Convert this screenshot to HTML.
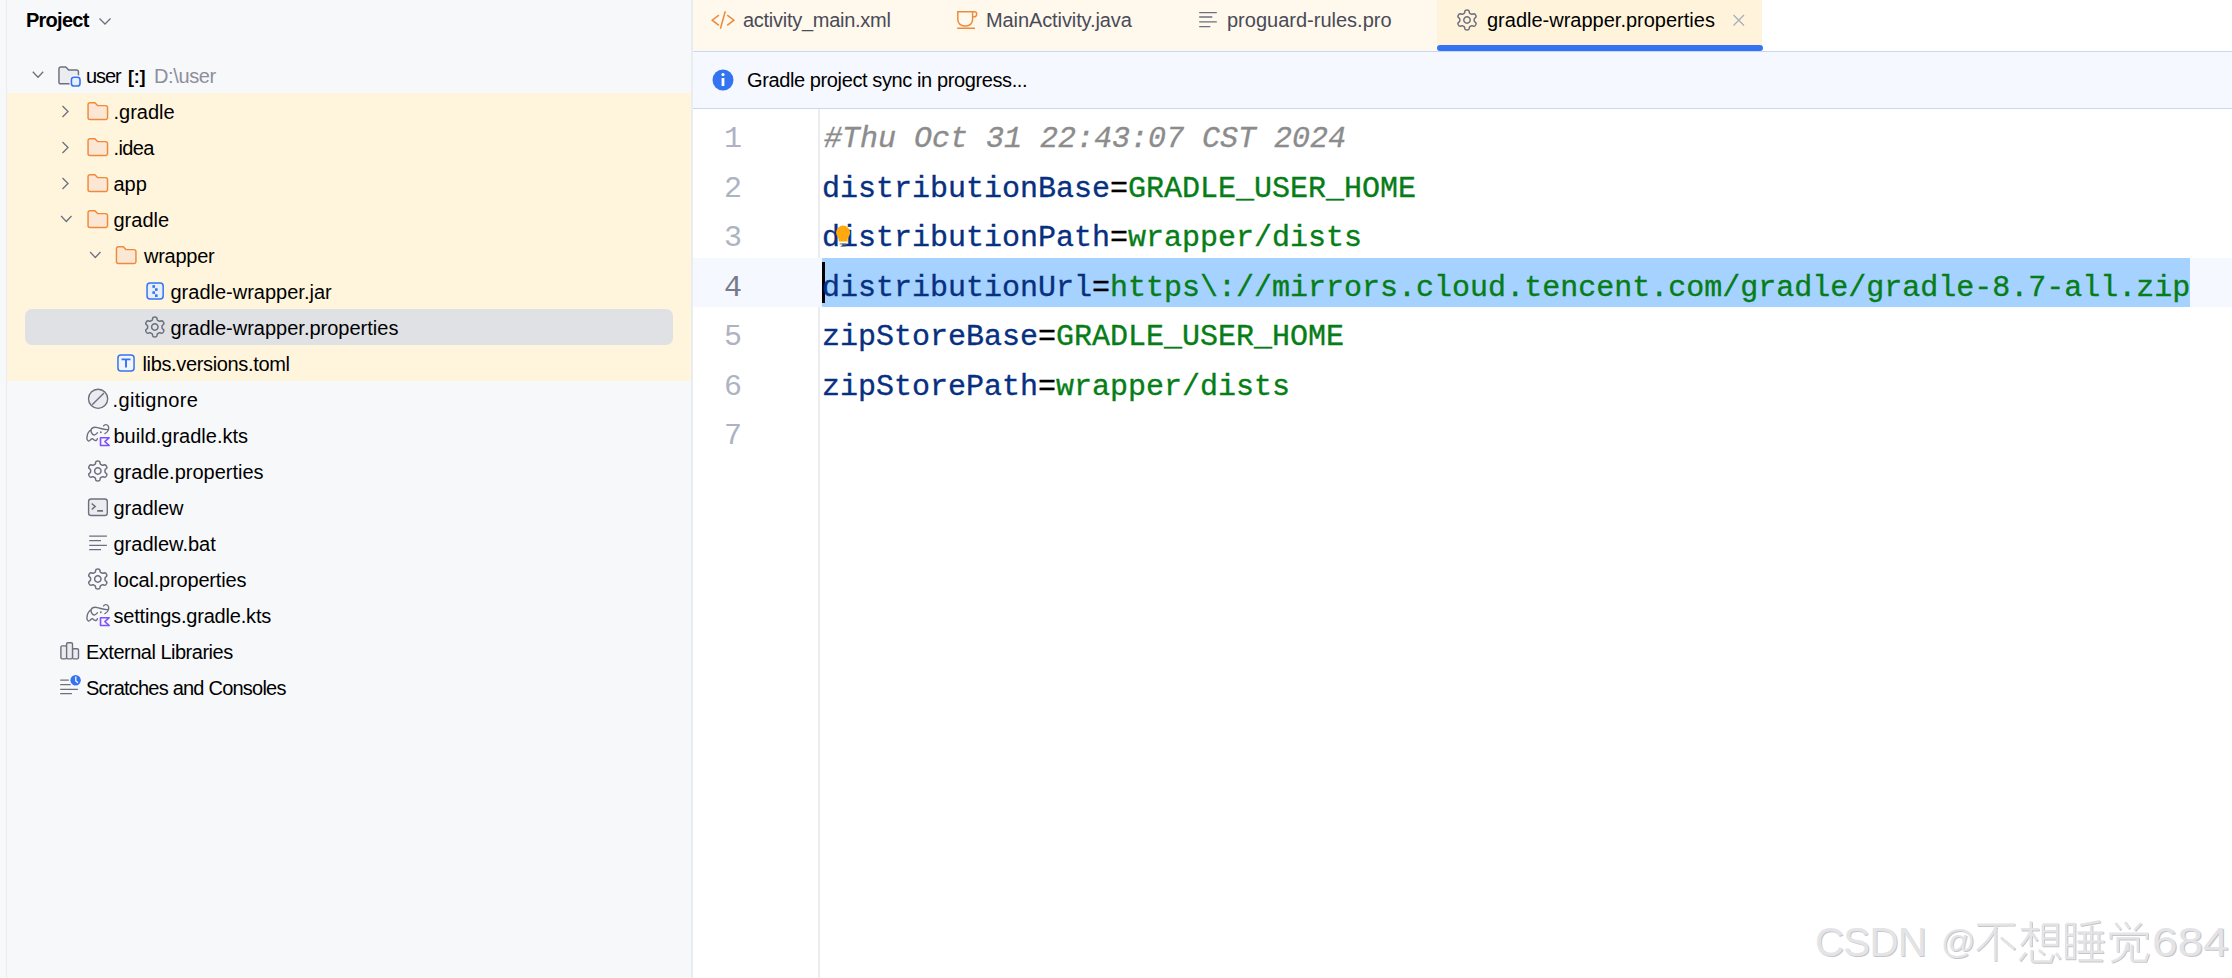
<!DOCTYPE html>
<html><head><meta charset="utf-8"><style>
html,body{margin:0;padding:0;}
body{width:2232px;height:978px;overflow:hidden;position:relative;background:#fff;font-family:'Liberation Sans', sans-serif;}
</style></head><body>
<div style="position:absolute;left:0;top:0;width:691px;height:978px;background:#F7F8FA"></div><div style="position:absolute;left:6px;top:0;width:1px;height:978px;background:#EBECF0"></div><div style="position:absolute;left:691px;top:0;width:2px;height:978px;background:#EBECF0"></div><div style="position:absolute;left:7px;top:93px;width:684px;height:288px;background:#FFF5DC"></div><div style="position:absolute;left:25px;top:309px;width:648px;height:36px;background:#DFE1E5;border-radius:7px"></div><div style="position:absolute;left:693px;top:0;width:744px;height:51px;background:#FFF8EC"></div><div style="position:absolute;left:1437px;top:0;width:325px;height:51px;background:#FFF4DB"></div><div style="position:absolute;left:1762px;top:0;width:470px;height:51px;background:#FFFFFF"></div><div style="position:absolute;left:1437px;top:45px;width:326px;height:6px;background:#3574F0;border-radius:3px 3px 3px 3px"></div><div style="position:absolute;left:693px;top:51px;width:1539px;height:1px;background:#C5D7FA"></div><div style="position:absolute;left:693px;top:52px;width:1539px;height:56px;background:#F5F8FE"></div><div style="position:absolute;left:693px;top:108px;width:1539px;height:1px;background:#C5D7FA"></div><div style="position:absolute;left:818px;top:109px;width:2px;height:869px;background:#EBECF0"></div><div style="position:absolute;left:693px;top:258px;width:1539px;height:49px;background:#F5F8FE"></div><div style="position:absolute;left:822px;top:258px;width:1368px;height:49px;background:#A6D2FF"></div><div style="position:absolute;left:822px;top:262px;width:3px;height:41px;background:#000"></div><div style="position:absolute;left:26px;top:2.17px;height:36px;line-height:36px;font-family:'Liberation Sans', sans-serif;font-size:20px;color:#000;font-weight:bold;white-space:pre;letter-spacing:-0.75px;">Project</div><div style="position:absolute;left:86px;top:57.87px;height:36px;line-height:36px;font-family:'Liberation Sans', sans-serif;font-size:20px;color:#000;font-weight:normal;white-space:pre;letter-spacing:-1.1px;">user</div><div style="position:absolute;left:128px;top:58.56px;height:36px;line-height:36px;font-family:'Liberation Sans', sans-serif;font-size:18px;color:#000;font-weight:bold;white-space:pre;letter-spacing:-0.3px;">[:]</div><div style="position:absolute;left:154px;top:57.87px;height:36px;line-height:36px;font-family:'Liberation Sans', sans-serif;font-size:20px;color:#8C8F9C;font-weight:normal;white-space:pre;letter-spacing:-0.37px;">D:\user</div><div style="position:absolute;left:113.5px;top:93.87px;height:36px;line-height:36px;font-family:'Liberation Sans', sans-serif;font-size:20px;color:#000;font-weight:normal;white-space:pre;letter-spacing:0px;">.gradle</div><div style="position:absolute;left:113.5px;top:129.87px;height:36px;line-height:36px;font-family:'Liberation Sans', sans-serif;font-size:20px;color:#000;font-weight:normal;white-space:pre;letter-spacing:-0.6px;">.idea</div><div style="position:absolute;left:113.5px;top:165.87px;height:36px;line-height:36px;font-family:'Liberation Sans', sans-serif;font-size:20px;color:#000;font-weight:normal;white-space:pre;letter-spacing:0px;">app</div><div style="position:absolute;left:113.5px;top:201.87px;height:36px;line-height:36px;font-family:'Liberation Sans', sans-serif;font-size:20px;color:#000;font-weight:normal;white-space:pre;letter-spacing:0px;">gradle</div><div style="position:absolute;left:144.0px;top:237.87px;height:36px;line-height:36px;font-family:'Liberation Sans', sans-serif;font-size:20px;color:#000;font-weight:normal;white-space:pre;letter-spacing:-0.25px;">wrapper</div><div style="position:absolute;left:170.5px;top:273.87px;height:36px;line-height:36px;font-family:'Liberation Sans', sans-serif;font-size:20px;color:#000;font-weight:normal;white-space:pre;letter-spacing:0px;">gradle-wrapper.jar</div><div style="position:absolute;left:170.5px;top:309.87px;height:36px;line-height:36px;font-family:'Liberation Sans', sans-serif;font-size:20px;color:#000;font-weight:normal;white-space:pre;letter-spacing:0px;">gradle-wrapper.properties</div><div style="position:absolute;left:142.5px;top:345.87px;height:36px;line-height:36px;font-family:'Liberation Sans', sans-serif;font-size:20px;color:#000;font-weight:normal;white-space:pre;letter-spacing:-0.35px;">libs.versions.toml</div><div style="position:absolute;left:112.5px;top:381.87px;height:36px;line-height:36px;font-family:'Liberation Sans', sans-serif;font-size:20px;color:#000;font-weight:normal;white-space:pre;letter-spacing:0.35px;">.gitignore</div><div style="position:absolute;left:113.5px;top:417.87px;height:36px;line-height:36px;font-family:'Liberation Sans', sans-serif;font-size:20px;color:#000;font-weight:normal;white-space:pre;letter-spacing:0px;">build.gradle.kts</div><div style="position:absolute;left:113.5px;top:453.87px;height:36px;line-height:36px;font-family:'Liberation Sans', sans-serif;font-size:20px;color:#000;font-weight:normal;white-space:pre;letter-spacing:0px;">gradle.properties</div><div style="position:absolute;left:113.5px;top:489.87px;height:36px;line-height:36px;font-family:'Liberation Sans', sans-serif;font-size:20px;color:#000;font-weight:normal;white-space:pre;letter-spacing:0px;">gradlew</div><div style="position:absolute;left:113.5px;top:525.87px;height:36px;line-height:36px;font-family:'Liberation Sans', sans-serif;font-size:20px;color:#000;font-weight:normal;white-space:pre;letter-spacing:0px;">gradlew.bat</div><div style="position:absolute;left:113.5px;top:561.87px;height:36px;line-height:36px;font-family:'Liberation Sans', sans-serif;font-size:20px;color:#000;font-weight:normal;white-space:pre;letter-spacing:-0.18px;">local.properties</div><div style="position:absolute;left:113.5px;top:597.87px;height:36px;line-height:36px;font-family:'Liberation Sans', sans-serif;font-size:20px;color:#000;font-weight:normal;white-space:pre;letter-spacing:-0.19px;">settings.gradle.kts</div><div style="position:absolute;left:86px;top:633.87px;height:36px;line-height:36px;font-family:'Liberation Sans', sans-serif;font-size:20px;color:#000;font-weight:normal;white-space:pre;letter-spacing:-0.5px;">External Libraries</div><div style="position:absolute;left:86px;top:669.87px;height:36px;line-height:36px;font-family:'Liberation Sans', sans-serif;font-size:20px;color:#000;font-weight:normal;white-space:pre;letter-spacing:-0.78px;">Scratches and Consoles</div><div style="position:absolute;left:743px;top:2.17px;height:36px;line-height:36px;font-family:'Liberation Sans', sans-serif;font-size:20px;color:#494B57;font-weight:normal;white-space:pre;letter-spacing:-0.27px;">activity_main.xml</div><div style="position:absolute;left:986px;top:2.17px;height:36px;line-height:36px;font-family:'Liberation Sans', sans-serif;font-size:20px;color:#494B57;font-weight:normal;white-space:pre;letter-spacing:-0.1px;">MainActivity.java</div><div style="position:absolute;left:1227px;top:2.17px;height:36px;line-height:36px;font-family:'Liberation Sans', sans-serif;font-size:20px;color:#494B57;font-weight:normal;white-space:pre;letter-spacing:0px;">proguard-rules.pro</div><div style="position:absolute;left:1487px;top:2.17px;height:36px;line-height:36px;font-family:'Liberation Sans', sans-serif;font-size:20px;color:#000;font-weight:normal;white-space:pre;letter-spacing:0px;">gradle-wrapper.properties</div><div style="position:absolute;left:747px;top:62.47px;height:36px;line-height:36px;font-family:'Liberation Sans', sans-serif;font-size:20px;color:#000;font-weight:normal;white-space:pre;letter-spacing:-0.39px;">Gradle project sync in progress...</div><div style="position:absolute;left:724px;top:114.00px;height:50px;line-height:50px;font-family:'Liberation Mono', monospace;font-size:30px;white-space:pre;"><span style="color:#AEB3C2">1</span></div><div style="position:absolute;left:824px;top:113.50px;height:50px;line-height:50px;font-family:'Liberation Mono', monospace;font-size:30px;white-space:pre;-webkit-text-stroke:0.35px currentColor;"><span style="color:#8C8C8C;font-style:italic">#Thu Oct 31 22:43:07 CST 2024</span></div><div style="position:absolute;left:724px;top:163.50px;height:50px;line-height:50px;font-family:'Liberation Mono', monospace;font-size:30px;white-space:pre;"><span style="color:#AEB3C2">2</span></div><div style="position:absolute;left:822px;top:163.50px;height:50px;line-height:50px;font-family:'Liberation Mono', monospace;font-size:30px;white-space:pre;-webkit-text-stroke:0.35px currentColor;"><span style="color:#083080">distributionBase</span><span style="color:#000000">=</span><span style="color:#067D17">GRADLE_USER_HOME</span></div><div style="position:absolute;left:724px;top:213.00px;height:50px;line-height:50px;font-family:'Liberation Mono', monospace;font-size:30px;white-space:pre;"><span style="color:#AEB3C2">3</span></div><div style="position:absolute;left:822px;top:213.00px;height:50px;line-height:50px;font-family:'Liberation Mono', monospace;font-size:30px;white-space:pre;-webkit-text-stroke:0.35px currentColor;"><span style="color:#083080">distributionPath</span><span style="color:#000000">=</span><span style="color:#067D17">wrapper/dists</span></div><div style="position:absolute;left:724px;top:262.50px;height:50px;line-height:50px;font-family:'Liberation Mono', monospace;font-size:30px;white-space:pre;"><span style="color:#767A8A">4</span></div><div style="position:absolute;left:822px;top:262.50px;height:50px;line-height:50px;font-family:'Liberation Mono', monospace;font-size:30px;white-space:pre;-webkit-text-stroke:0.35px currentColor;"><span style="color:#083080">distributionUrl</span><span style="color:#000000">=</span><span style="color:#067D17">https\://mirrors.cloud.tencent.com/gradle/gradle-8.7-all.zip</span></div><div style="position:absolute;left:724px;top:312.00px;height:50px;line-height:50px;font-family:'Liberation Mono', monospace;font-size:30px;white-space:pre;"><span style="color:#AEB3C2">5</span></div><div style="position:absolute;left:822px;top:312.00px;height:50px;line-height:50px;font-family:'Liberation Mono', monospace;font-size:30px;white-space:pre;-webkit-text-stroke:0.35px currentColor;"><span style="color:#083080">zipStoreBase</span><span style="color:#000000">=</span><span style="color:#067D17">GRADLE_USER_HOME</span></div><div style="position:absolute;left:724px;top:361.50px;height:50px;line-height:50px;font-family:'Liberation Mono', monospace;font-size:30px;white-space:pre;"><span style="color:#AEB3C2">6</span></div><div style="position:absolute;left:822px;top:361.50px;height:50px;line-height:50px;font-family:'Liberation Mono', monospace;font-size:30px;white-space:pre;-webkit-text-stroke:0.35px currentColor;"><span style="color:#083080">zipStorePath</span><span style="color:#000000">=</span><span style="color:#067D17">wrapper/dists</span></div><div style="position:absolute;left:724px;top:411.00px;height:50px;line-height:50px;font-family:'Liberation Mono', monospace;font-size:30px;white-space:pre;"><span style="color:#AEB3C2">7</span></div><div style="position:absolute;left:1815px;top:924.54px;height:36px;line-height:36px;font-family:'Liberation Sans', sans-serif;font-size:40.3px;color:#E4E4E6;font-weight:normal;white-space:pre;letter-spacing:-0.75px;text-shadow:1px 1px 0.6px #C6C6CA;">CSDN</div><div style="position:absolute;left:1941px;top:923.22px;height:36px;line-height:36px;font-family:'Liberation Sans', sans-serif;font-size:34px;color:#E4E4E6;font-weight:normal;white-space:pre;letter-spacing:0px;text-shadow:1px 1px 0.6px #C6C6CA;">@</div><div style="position:absolute;left:2152px;top:924.54px;height:36px;line-height:36px;font-family:'Liberation Sans', sans-serif;font-size:40.3px;color:#E4E4E6;font-weight:normal;white-space:pre;letter-spacing:0px;text-shadow:1px 1px 0.6px #C6C6CA;transform:scaleX(1.14);transform-origin:0 0;">684</div>
<svg width="2232" height="978" style="position:absolute;left:0;top:0"><path d="M99.5 18.5 L105 24 L110.5 18.5" fill="none" stroke="#6C707E" stroke-width="1.3"/><path d="M32.80 71.80 L38.00 77.30 L43.20 71.80" fill="none" stroke="#6C707E" stroke-width="1.3"/><g transform="translate(58.30,65.00) scale(1.3)"><path d="M0.5 3 a1.5 1.5 0 0 1 1.5-1.5 h3.8 l2.2 2.3 h6 a1.5 1.5 0 0 1 1.5 1.5 v7.7 a1.5 1.5 0 0 1 -1.5 1.5 h-12 a1.5 1.5 0 0 1 -1.5-1.5z" fill="#EBECF0" stroke="#6C707E" stroke-width="1.12" stroke-linejoin="round"/></g><rect x="71.4" y="77.2" width="8.6" height="8.8" rx="2.6" fill="#F7F8FA" stroke="#F7F8FA" stroke-width="4"/><rect x="71.4" y="77.2" width="8.6" height="8.8" rx="2.6" fill="#E7EFFD" stroke="#3574F0" stroke-width="1.6"/><path d="M62.50 106.00 L68.00 111.50 L62.50 117.00" fill="none" stroke="#6C707E" stroke-width="1.3"/><g transform="translate(87.40,100.70) scale(1.3)"><path d="M0.5 3 a1.5 1.5 0 0 1 1.5-1.5 h3.8 l2.2 2.3 h6 a1.5 1.5 0 0 1 1.5 1.5 v7.7 a1.5 1.5 0 0 1 -1.5 1.5 h-12 a1.5 1.5 0 0 1 -1.5-1.5z" fill="#FCE6D4" stroke="#EE8A3A" stroke-width="1.12" stroke-linejoin="round"/></g><path d="M62.50 142.00 L68.00 147.50 L62.50 153.00" fill="none" stroke="#6C707E" stroke-width="1.3"/><g transform="translate(87.40,136.70) scale(1.3)"><path d="M0.5 3 a1.5 1.5 0 0 1 1.5-1.5 h3.8 l2.2 2.3 h6 a1.5 1.5 0 0 1 1.5 1.5 v7.7 a1.5 1.5 0 0 1 -1.5 1.5 h-12 a1.5 1.5 0 0 1 -1.5-1.5z" fill="#FCE6D4" stroke="#EE8A3A" stroke-width="1.12" stroke-linejoin="round"/></g><path d="M62.50 178.00 L68.00 183.50 L62.50 189.00" fill="none" stroke="#6C707E" stroke-width="1.3"/><g transform="translate(87.40,172.70) scale(1.3)"><path d="M0.5 3 a1.5 1.5 0 0 1 1.5-1.5 h3.8 l2.2 2.3 h6 a1.5 1.5 0 0 1 1.5 1.5 v7.7 a1.5 1.5 0 0 1 -1.5 1.5 h-12 a1.5 1.5 0 0 1 -1.5-1.5z" fill="#FCE6D4" stroke="#EE8A3A" stroke-width="1.12" stroke-linejoin="round"/></g><path d="M61.10 216.00 L66.30 221.50 L71.50 216.00" fill="none" stroke="#6C707E" stroke-width="1.3"/><g transform="translate(87.40,208.70) scale(1.3)"><path d="M0.5 3 a1.5 1.5 0 0 1 1.5-1.5 h3.8 l2.2 2.3 h6 a1.5 1.5 0 0 1 1.5 1.5 v7.7 a1.5 1.5 0 0 1 -1.5 1.5 h-12 a1.5 1.5 0 0 1 -1.5-1.5z" fill="#FCE6D4" stroke="#EE8A3A" stroke-width="1.12" stroke-linejoin="round"/></g><path d="M90.10 252.00 L95.30 257.50 L100.50 252.00" fill="none" stroke="#6C707E" stroke-width="1.3"/><g transform="translate(115.80,244.70) scale(1.3)"><path d="M0.5 3 a1.5 1.5 0 0 1 1.5-1.5 h3.8 l2.2 2.3 h6 a1.5 1.5 0 0 1 1.5 1.5 v7.7 a1.5 1.5 0 0 1 -1.5 1.5 h-12 a1.5 1.5 0 0 1 -1.5-1.5z" fill="#FCE6D4" stroke="#EE8A3A" stroke-width="1.12" stroke-linejoin="round"/></g><rect x="147.05" y="282.95" width="16.1" height="16.1" rx="3" fill="#E7EFFD" stroke="#3574F0" stroke-width="1.5"/><rect x="152.40" y="285.20" width="2.6" height="2.6" fill="#3574F0"/><rect x="155.00" y="288.25" width="2.6" height="2.6" fill="#3574F0"/><rect x="152.40" y="291.30" width="2.6" height="2.6" fill="#3574F0"/><rect x="155.00" y="294.35" width="2.6" height="2.6" fill="#3574F0"/><g transform="translate(154.80,327.00)"><path d="M7.20 0.00 L7.20 0.38 L7.20 0.76 L7.27 1.15 L7.56 1.61 L8.26 2.21 L8.91 2.89 L9.09 3.49 L9.00 4.01 L8.81 4.49 L8.57 4.95 L8.30 5.39 L7.97 5.79 L7.57 6.13 L6.96 6.27 L6.05 6.05 L5.17 5.75 L4.63 5.72 L4.26 5.86 L3.93 6.05 L3.60 6.24 L3.27 6.42 L2.95 6.62 L2.64 6.87 L2.39 7.35 L2.21 8.26 L1.95 9.16 L1.52 9.62 L1.03 9.80 L0.52 9.88 L0.00 9.90 L-0.52 9.88 L-1.03 9.80 L-1.52 9.62 L-1.95 9.16 L-2.21 8.26 L-2.39 7.35 L-2.64 6.87 L-2.95 6.62 L-3.27 6.42 L-3.60 6.24 L-3.93 6.05 L-4.26 5.86 L-4.63 5.72 L-5.17 5.75 L-6.05 6.05 L-6.96 6.27 L-7.57 6.13 L-7.97 5.79 L-8.30 5.39 L-8.57 4.95 L-8.81 4.49 L-9.00 4.01 L-9.09 3.49 L-8.91 2.89 L-8.26 2.21 L-7.56 1.61 L-7.27 1.15 L-7.20 0.76 L-7.20 0.38 L-7.20 0.00 L-7.20 -0.38 L-7.20 -0.76 L-7.27 -1.15 L-7.56 -1.61 L-8.26 -2.21 L-8.91 -2.89 L-9.09 -3.49 L-9.00 -4.01 L-8.81 -4.49 L-8.57 -4.95 L-8.30 -5.39 L-7.97 -5.79 L-7.57 -6.13 L-6.96 -6.27 L-6.05 -6.05 L-5.17 -5.75 L-4.63 -5.72 L-4.26 -5.86 L-3.93 -6.05 L-3.60 -6.24 L-3.27 -6.42 L-2.95 -6.62 L-2.64 -6.87 L-2.39 -7.35 L-2.21 -8.26 L-1.95 -9.16 L-1.52 -9.62 L-1.03 -9.80 L-0.52 -9.88 L-0.00 -9.90 L0.52 -9.88 L1.03 -9.80 L1.52 -9.62 L1.95 -9.16 L2.21 -8.26 L2.39 -7.35 L2.64 -6.87 L2.95 -6.62 L3.27 -6.42 L3.60 -6.24 L3.93 -6.05 L4.26 -5.86 L4.63 -5.72 L5.17 -5.75 L6.05 -6.05 L6.96 -6.27 L7.57 -6.13 L7.97 -5.79 L8.30 -5.39 L8.57 -4.95 L8.81 -4.49 L9.00 -4.01 L9.09 -3.49 L8.91 -2.89 L8.26 -2.21 L7.56 -1.61 L7.27 -1.15 L7.20 -0.76 L7.20 -0.38Z" fill="none" stroke="#6C707E" stroke-width="1.5" stroke-linejoin="round"/><circle cx="0" cy="0" r="3.2" fill="none" stroke="#6C707E" stroke-width="1.5"/></g><rect x="117.95" y="354.95" width="16.1" height="16.1" rx="3" fill="#F0F5FF" stroke="#3574F0" stroke-width="1.5"/><path d="M121.5 359.40 H130.5 M126 359.40 V367.60" fill="none" stroke="#3574F0" stroke-width="1.9"/><circle cx="98.1" cy="398.80" r="9.6" fill="#EBECF0" stroke="#6C707E" stroke-width="1.4"/><path d="M92.2 404.70 L104 392.90" stroke="#6C707E" stroke-width="1.4"/><g transform="translate(0,0.00)"><path d="M103.6 425.9 C104.5 424.5 107 424 108.2 426 C109.3 428 108.7 431.8 104.9 433.6 M108.2 429.5 C105 430 101 428.5 97.5 427.6 C94.5 426.9 92 427.5 91.2 429.5 C90.5 431.5 92 434.8 94 435 C95.5 435.2 96.5 433.8 97.4 432.8 M91.2 429.5 C89 431 87 434 86.9 438 C86.8 440.5 88.5 441.5 89.8 440.5 C90.8 439.5 91.5 438.2 92.8 438.8 C94 439.5 94.5 441 96 440.5 C97 440 97.3 439 97.4 438.6" fill="none" stroke="#6C707E" stroke-width="1.4" stroke-linecap="round"/><circle cx="100.8" cy="432.2" r="0.95" fill="#6C707E"/><path d="M100.5 437.7 H109.2 L104.9 441.6 L109.2 445.5 H100.5 Z" fill="none" stroke="#7F52FF" stroke-width="1.6" stroke-linejoin="round"/></g><g transform="translate(97.80,471.00)"><path d="M7.20 0.00 L7.20 0.38 L7.20 0.76 L7.27 1.15 L7.56 1.61 L8.26 2.21 L8.91 2.89 L9.09 3.49 L9.00 4.01 L8.81 4.49 L8.57 4.95 L8.30 5.39 L7.97 5.79 L7.57 6.13 L6.96 6.27 L6.05 6.05 L5.17 5.75 L4.63 5.72 L4.26 5.86 L3.93 6.05 L3.60 6.24 L3.27 6.42 L2.95 6.62 L2.64 6.87 L2.39 7.35 L2.21 8.26 L1.95 9.16 L1.52 9.62 L1.03 9.80 L0.52 9.88 L0.00 9.90 L-0.52 9.88 L-1.03 9.80 L-1.52 9.62 L-1.95 9.16 L-2.21 8.26 L-2.39 7.35 L-2.64 6.87 L-2.95 6.62 L-3.27 6.42 L-3.60 6.24 L-3.93 6.05 L-4.26 5.86 L-4.63 5.72 L-5.17 5.75 L-6.05 6.05 L-6.96 6.27 L-7.57 6.13 L-7.97 5.79 L-8.30 5.39 L-8.57 4.95 L-8.81 4.49 L-9.00 4.01 L-9.09 3.49 L-8.91 2.89 L-8.26 2.21 L-7.56 1.61 L-7.27 1.15 L-7.20 0.76 L-7.20 0.38 L-7.20 0.00 L-7.20 -0.38 L-7.20 -0.76 L-7.27 -1.15 L-7.56 -1.61 L-8.26 -2.21 L-8.91 -2.89 L-9.09 -3.49 L-9.00 -4.01 L-8.81 -4.49 L-8.57 -4.95 L-8.30 -5.39 L-7.97 -5.79 L-7.57 -6.13 L-6.96 -6.27 L-6.05 -6.05 L-5.17 -5.75 L-4.63 -5.72 L-4.26 -5.86 L-3.93 -6.05 L-3.60 -6.24 L-3.27 -6.42 L-2.95 -6.62 L-2.64 -6.87 L-2.39 -7.35 L-2.21 -8.26 L-1.95 -9.16 L-1.52 -9.62 L-1.03 -9.80 L-0.52 -9.88 L-0.00 -9.90 L0.52 -9.88 L1.03 -9.80 L1.52 -9.62 L1.95 -9.16 L2.21 -8.26 L2.39 -7.35 L2.64 -6.87 L2.95 -6.62 L3.27 -6.42 L3.60 -6.24 L3.93 -6.05 L4.26 -5.86 L4.63 -5.72 L5.17 -5.75 L6.05 -6.05 L6.96 -6.27 L7.57 -6.13 L7.97 -5.79 L8.30 -5.39 L8.57 -4.95 L8.81 -4.49 L9.00 -4.01 L9.09 -3.49 L8.91 -2.89 L8.26 -2.21 L7.56 -1.61 L7.27 -1.15 L7.20 -0.76 L7.20 -0.38Z" fill="none" stroke="#6C707E" stroke-width="1.5" stroke-linejoin="round"/><circle cx="0" cy="0" r="3.2" fill="none" stroke="#6C707E" stroke-width="1.5"/></g><rect x="88.6" y="499.00" width="18.7" height="16.5" rx="2.6" fill="#EBECF0" stroke="#6C707E" stroke-width="1.4"/><path d="M91.7 503.50 L95.1 506.50 L91.7 509.50 M97.2 510.90 H103" fill="none" stroke="#6C707E" stroke-width="1.6"/><path d="M89.2 536.20 H106.9 M89.2 540.70 H101 M89.2 545.30 H106.9 M89.2 549.60 H101" fill="none" stroke="#6C707E" stroke-width="1.3"/><g transform="translate(97.80,579.00)"><path d="M7.20 0.00 L7.20 0.38 L7.20 0.76 L7.27 1.15 L7.56 1.61 L8.26 2.21 L8.91 2.89 L9.09 3.49 L9.00 4.01 L8.81 4.49 L8.57 4.95 L8.30 5.39 L7.97 5.79 L7.57 6.13 L6.96 6.27 L6.05 6.05 L5.17 5.75 L4.63 5.72 L4.26 5.86 L3.93 6.05 L3.60 6.24 L3.27 6.42 L2.95 6.62 L2.64 6.87 L2.39 7.35 L2.21 8.26 L1.95 9.16 L1.52 9.62 L1.03 9.80 L0.52 9.88 L0.00 9.90 L-0.52 9.88 L-1.03 9.80 L-1.52 9.62 L-1.95 9.16 L-2.21 8.26 L-2.39 7.35 L-2.64 6.87 L-2.95 6.62 L-3.27 6.42 L-3.60 6.24 L-3.93 6.05 L-4.26 5.86 L-4.63 5.72 L-5.17 5.75 L-6.05 6.05 L-6.96 6.27 L-7.57 6.13 L-7.97 5.79 L-8.30 5.39 L-8.57 4.95 L-8.81 4.49 L-9.00 4.01 L-9.09 3.49 L-8.91 2.89 L-8.26 2.21 L-7.56 1.61 L-7.27 1.15 L-7.20 0.76 L-7.20 0.38 L-7.20 0.00 L-7.20 -0.38 L-7.20 -0.76 L-7.27 -1.15 L-7.56 -1.61 L-8.26 -2.21 L-8.91 -2.89 L-9.09 -3.49 L-9.00 -4.01 L-8.81 -4.49 L-8.57 -4.95 L-8.30 -5.39 L-7.97 -5.79 L-7.57 -6.13 L-6.96 -6.27 L-6.05 -6.05 L-5.17 -5.75 L-4.63 -5.72 L-4.26 -5.86 L-3.93 -6.05 L-3.60 -6.24 L-3.27 -6.42 L-2.95 -6.62 L-2.64 -6.87 L-2.39 -7.35 L-2.21 -8.26 L-1.95 -9.16 L-1.52 -9.62 L-1.03 -9.80 L-0.52 -9.88 L-0.00 -9.90 L0.52 -9.88 L1.03 -9.80 L1.52 -9.62 L1.95 -9.16 L2.21 -8.26 L2.39 -7.35 L2.64 -6.87 L2.95 -6.62 L3.27 -6.42 L3.60 -6.24 L3.93 -6.05 L4.26 -5.86 L4.63 -5.72 L5.17 -5.75 L6.05 -6.05 L6.96 -6.27 L7.57 -6.13 L7.97 -5.79 L8.30 -5.39 L8.57 -4.95 L8.81 -4.49 L9.00 -4.01 L9.09 -3.49 L8.91 -2.89 L8.26 -2.21 L7.56 -1.61 L7.27 -1.15 L7.20 -0.76 L7.20 -0.38Z" fill="none" stroke="#6C707E" stroke-width="1.5" stroke-linejoin="round"/><circle cx="0" cy="0" r="3.2" fill="none" stroke="#6C707E" stroke-width="1.5"/></g><g transform="translate(0,180.00)"><path d="M103.6 425.9 C104.5 424.5 107 424 108.2 426 C109.3 428 108.7 431.8 104.9 433.6 M108.2 429.5 C105 430 101 428.5 97.5 427.6 C94.5 426.9 92 427.5 91.2 429.5 C90.5 431.5 92 434.8 94 435 C95.5 435.2 96.5 433.8 97.4 432.8 M91.2 429.5 C89 431 87 434 86.9 438 C86.8 440.5 88.5 441.5 89.8 440.5 C90.8 439.5 91.5 438.2 92.8 438.8 C94 439.5 94.5 441 96 440.5 C97 440 97.3 439 97.4 438.6" fill="none" stroke="#6C707E" stroke-width="1.4" stroke-linecap="round"/><circle cx="100.8" cy="432.2" r="0.95" fill="#6C707E"/><path d="M100.5 437.7 H109.2 L104.9 441.6 L109.2 445.5 H100.5 Z" fill="none" stroke="#7F52FF" stroke-width="1.6" stroke-linejoin="round"/></g><g transform="translate(0,0.00)" fill="#EBECF0" stroke="#6C707E" stroke-width="1.4"><rect x="60.9" y="645.9" width="5.8" height="13" rx="1.3"/><rect x="72.4" y="648.8" width="6.1" height="10.1" rx="1.3"/><rect x="66.6" y="642.7" width="5.9" height="16.2" rx="1.3"/></g><g transform="translate(0,0.00)"><path d="M60.2 680.2 H68.8 M60.2 684.6 H70.7 M60.2 689.4 H77.9 M60.2 693.6 H71.9" fill="none" stroke="#6C707E" stroke-width="1.3"/><circle cx="75.6" cy="680.2" r="6.2" fill="#F7F8FA"/><circle cx="75.6" cy="680.2" r="5.2" fill="#3574F0"/><path d="M75.8 676.6 V681 L77.9 682.8" stroke="#fff" stroke-width="1.2" fill="none"/></g><path d="M718.9 15.2 L712.2 20.2 L718.9 25.3 M727.2 15.2 L733.9 20.2 L727.2 25.3 M725.3 11.2 L720.4 28.8" fill="none" stroke="#EE8A3A" stroke-width="1.5"/><path d="M957.8 11.7 H972.6 V19.5 A6.5 6.5 0 0 1 966.1 26 H964.3 A6.5 6.5 0 0 1 957.8 19.5 Z M972.6 11.7 H974.6 A2 2 0 0 1 976.6 13.7 V14.4 A2.4 2.4 0 0 1 974.2 16.8 H972.6 M957.2 28.2 H975" fill="none" stroke="#EE8A3A" stroke-width="1.5"/><path d="M1199.2 12.6 H1216.8 M1199.2 17 H1212.3 M1199.2 21.8 H1216.8 M1199.2 26.6 H1210.3" fill="none" stroke="#6C707E" stroke-width="1.3"/><g transform="translate(1467,20)"><path d="M7.20 0.00 L7.20 0.38 L7.20 0.76 L7.27 1.15 L7.56 1.61 L8.26 2.21 L8.91 2.89 L9.09 3.49 L9.00 4.01 L8.81 4.49 L8.57 4.95 L8.30 5.39 L7.97 5.79 L7.57 6.13 L6.96 6.27 L6.05 6.05 L5.17 5.75 L4.63 5.72 L4.26 5.86 L3.93 6.05 L3.60 6.24 L3.27 6.42 L2.95 6.62 L2.64 6.87 L2.39 7.35 L2.21 8.26 L1.95 9.16 L1.52 9.62 L1.03 9.80 L0.52 9.88 L0.00 9.90 L-0.52 9.88 L-1.03 9.80 L-1.52 9.62 L-1.95 9.16 L-2.21 8.26 L-2.39 7.35 L-2.64 6.87 L-2.95 6.62 L-3.27 6.42 L-3.60 6.24 L-3.93 6.05 L-4.26 5.86 L-4.63 5.72 L-5.17 5.75 L-6.05 6.05 L-6.96 6.27 L-7.57 6.13 L-7.97 5.79 L-8.30 5.39 L-8.57 4.95 L-8.81 4.49 L-9.00 4.01 L-9.09 3.49 L-8.91 2.89 L-8.26 2.21 L-7.56 1.61 L-7.27 1.15 L-7.20 0.76 L-7.20 0.38 L-7.20 0.00 L-7.20 -0.38 L-7.20 -0.76 L-7.27 -1.15 L-7.56 -1.61 L-8.26 -2.21 L-8.91 -2.89 L-9.09 -3.49 L-9.00 -4.01 L-8.81 -4.49 L-8.57 -4.95 L-8.30 -5.39 L-7.97 -5.79 L-7.57 -6.13 L-6.96 -6.27 L-6.05 -6.05 L-5.17 -5.75 L-4.63 -5.72 L-4.26 -5.86 L-3.93 -6.05 L-3.60 -6.24 L-3.27 -6.42 L-2.95 -6.62 L-2.64 -6.87 L-2.39 -7.35 L-2.21 -8.26 L-1.95 -9.16 L-1.52 -9.62 L-1.03 -9.80 L-0.52 -9.88 L-0.00 -9.90 L0.52 -9.88 L1.03 -9.80 L1.52 -9.62 L1.95 -9.16 L2.21 -8.26 L2.39 -7.35 L2.64 -6.87 L2.95 -6.62 L3.27 -6.42 L3.60 -6.24 L3.93 -6.05 L4.26 -5.86 L4.63 -5.72 L5.17 -5.75 L6.05 -6.05 L6.96 -6.27 L7.57 -6.13 L7.97 -5.79 L8.30 -5.39 L8.57 -4.95 L8.81 -4.49 L9.00 -4.01 L9.09 -3.49 L8.91 -2.89 L8.26 -2.21 L7.56 -1.61 L7.27 -1.15 L7.20 -0.76 L7.20 -0.38Z" fill="none" stroke="#6C707E" stroke-width="1.5" stroke-linejoin="round"/><circle cx="0" cy="0" r="3.2" fill="none" stroke="#6C707E" stroke-width="1.5"/></g><path d="M1733.5 15 L1744 25.5 M1744 15 L1733.5 25.5" stroke="#A8ADBD" stroke-width="1.3"/><circle cx="723" cy="80" r="10.5" fill="#3574F0"/><rect x="721.6" y="78" width="2.8" height="8" fill="#fff"/><circle cx="723" cy="74.6" r="1.6" fill="#fff"/><path d="M836.1 232.6 A7 7 0 0 1 850.1 232.6 C850.1 235.6 848.3 237 847.6 239 V241.6 H838.6 V239 C837.9 237 836.1 235.6 836.1 232.6Z" fill="#FFA90F"/><path d="M839.6 243.8 H846.6 M840.6 246.3 H845.6" stroke="#8C8C8C" stroke-width="1.2"/><path d="M1977.03 924.86 L2014.66 924.41 M1995.39 925.30 L1995.39 961.15 M1996.29 926.65 Q1988.67 941.88 1977.03 950.39 M2000.77 937.40 L2014.66 949.05 M2020.93 929.34 L2038.85 929.34 M2030.79 921.27 L2030.79 946.36 M2030.79 930.68 Q2026.31 940.09 2020.93 945.47 M2031.68 932.92 L2037.06 940.54 M2042.89 924.41 L2057.22 924.41 L2057.22 945.02 L2042.89 945.02 L2042.89 924.41 M2042.89 931.13 L2057.22 931.13 M2042.89 938.30 L2057.22 938.30 M2025.86 952.63 L2019.59 960.70 M2031.68 949.95 L2031.68 959.80 Q2031.68 961.59 2034.37 961.59 L2050.50 961.59 L2053.19 954.43 M2038.85 949.95 L2044.23 954.43 M2055.88 953.08 L2059.91 958.91 M2066.18 923.96 L2074.25 923.96 L2074.25 958.01 L2066.18 958.01 L2066.18 923.96 M2066.18 934.71 L2074.25 934.71 M2066.18 945.02 L2074.25 945.02 M2100.23 921.27 L2080.07 924.86 M2077.38 932.47 L2103.37 932.47 M2091.27 924.86 L2091.27 960.25 M2077.38 941.43 L2104.27 941.43 M2084.55 932.47 L2084.55 951.74 M2098.44 932.47 L2098.44 951.74 M2077.38 951.74 L2103.37 951.74 M2078.28 960.25 L2102.47 960.25 M2115.47 923.06 L2120.39 929.34 M2124.87 922.17 L2129.35 928.44 M2141.00 923.06 L2134.28 930.23 M2110.54 938.75 L2110.54 933.82 L2146.83 933.82 L2146.83 938.75 M2117.71 951.74 L2117.71 938.30 L2137.87 938.30 L2137.87 951.74 M2127.56 941.88 L2127.56 950.84 M2126.67 944.57 Q2125.77 958.01 2111.43 961.59 M2131.59 944.57 L2131.59 958.91 Q2131.59 960.70 2134.28 960.70 L2145.48 960.70 L2148.17 953.53" transform="translate(0.9,0.9)" fill="none" stroke="#C6C6CA" stroke-width="2.5" stroke-linecap="butt" stroke-linejoin="miter"/><path d="M1977.03 924.86 L2014.66 924.41 M1995.39 925.30 L1995.39 961.15 M1996.29 926.65 Q1988.67 941.88 1977.03 950.39 M2000.77 937.40 L2014.66 949.05 M2020.93 929.34 L2038.85 929.34 M2030.79 921.27 L2030.79 946.36 M2030.79 930.68 Q2026.31 940.09 2020.93 945.47 M2031.68 932.92 L2037.06 940.54 M2042.89 924.41 L2057.22 924.41 L2057.22 945.02 L2042.89 945.02 L2042.89 924.41 M2042.89 931.13 L2057.22 931.13 M2042.89 938.30 L2057.22 938.30 M2025.86 952.63 L2019.59 960.70 M2031.68 949.95 L2031.68 959.80 Q2031.68 961.59 2034.37 961.59 L2050.50 961.59 L2053.19 954.43 M2038.85 949.95 L2044.23 954.43 M2055.88 953.08 L2059.91 958.91 M2066.18 923.96 L2074.25 923.96 L2074.25 958.01 L2066.18 958.01 L2066.18 923.96 M2066.18 934.71 L2074.25 934.71 M2066.18 945.02 L2074.25 945.02 M2100.23 921.27 L2080.07 924.86 M2077.38 932.47 L2103.37 932.47 M2091.27 924.86 L2091.27 960.25 M2077.38 941.43 L2104.27 941.43 M2084.55 932.47 L2084.55 951.74 M2098.44 932.47 L2098.44 951.74 M2077.38 951.74 L2103.37 951.74 M2078.28 960.25 L2102.47 960.25 M2115.47 923.06 L2120.39 929.34 M2124.87 922.17 L2129.35 928.44 M2141.00 923.06 L2134.28 930.23 M2110.54 938.75 L2110.54 933.82 L2146.83 933.82 L2146.83 938.75 M2117.71 951.74 L2117.71 938.30 L2137.87 938.30 L2137.87 951.74 M2127.56 941.88 L2127.56 950.84 M2126.67 944.57 Q2125.77 958.01 2111.43 961.59 M2131.59 944.57 L2131.59 958.91 Q2131.59 960.70 2134.28 960.70 L2145.48 960.70 L2148.17 953.53" fill="none" stroke="#E4E4E6" stroke-width="2.5" stroke-linecap="butt" stroke-linejoin="miter"/></svg>
</body></html>
